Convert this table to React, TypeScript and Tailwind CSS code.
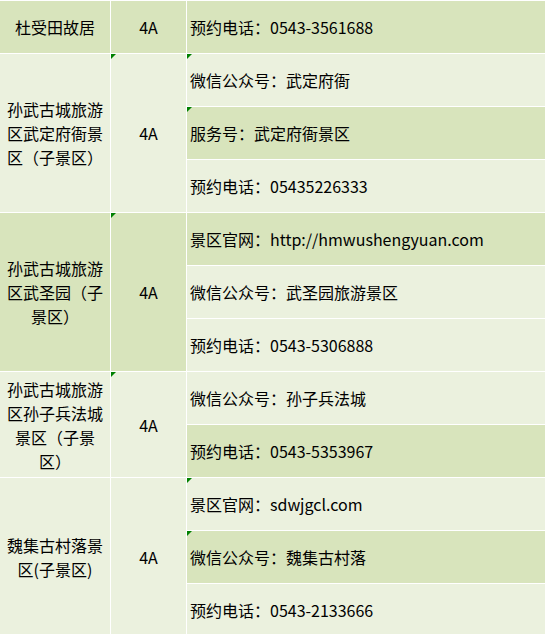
import type { ReactNode } from "react";

const D = "bg-[#d8e4bc]";
const L = "bg-[#ebf1de]";

type Sub = { text: string; dark: boolean; mark?: boolean };
type Group = { name: ReactNode; dark: boolean; mark?: boolean; subs: Sub[] };

const groups: Group[] = [
  { name: "杜受田故居", dark: true, subs: [{ text: "预约电话：0543-3561688", dark: true }] },
  {
    name: "孙武古城旅游区武定府衙景区（子景区）",
    dark: false,
    mark: true,
    subs: [
      { text: "微信公众号：武定府衙", dark: false, mark: true },
      { text: "服务号：武定府衙景区", dark: true, mark: true },
      { text: "预约电话：05435226333", dark: false },
    ],
  },
  {
    name: "孙武古城旅游区武圣园（子景区）",
    dark: true,
    mark: true,
    subs: [
      { text: "景区官网：http://hmwushengyuan.com", dark: true },
      { text: "微信公众号：武圣园旅游景区", dark: false },
      { text: "预约电话：0543-5306888", dark: false },
    ],
  },
  {
    name: "孙武古城旅游区孙子兵法城景区（子景区）",
    dark: false,
    mark: true,
    subs: [
      { text: "微信公众号：孙子兵法城", dark: false },
      { text: "预约电话：0543-5353967", dark: true },
    ],
  },
  {
    name: "魏集古村落景区(子景区)",
    dark: false,
    subs: [
      { text: "景区官网：sdwjgcl.com", dark: false, mark: true },
      { text: "微信公众号：魏集古村落", dark: true, mark: true },
      { text: "预约电话：0543-2133666", dark: false },
    ],
  },
];

const Mark = () => (
  <span className="absolute left-0 top-0 w-0 h-0 border-t-[5px] border-r-[5px] border-t-[#008000] border-r-transparent" />
);

export default function App() {
  return (
    <div
      className="w-[545px] h-[634px] overflow-hidden bg-white pt-px text-[16px] leading-6 text-black"
      style={{ fontFamily: '"Microsoft YaHei", "Noto Sans CJK SC", sans-serif' }}
    >
      <div className="flex flex-col gap-px">
        {groups.map((g, i) => (
          <div key={i} className="flex gap-px">
            <div className={`w-[110px] shrink-0 flex items-center justify-center px-[7px] text-center ${g.dark ? D : L}`}>
              {g.name}
            </div>
            <div className={`relative w-[75px] shrink-0 flex items-center justify-center ${g.dark ? D : L}`}>
              {g.mark && <Mark />}
              4A
            </div>
            <div className="flex-1 flex flex-col gap-px">
              {g.subs.map((s, j) => (
                <div key={j} className={`relative h-[52px] flex items-center pl-[3px] whitespace-nowrap ${s.dark ? D : L}`}>
                  {s.mark && <Mark />}
                  {s.text}
                </div>
              ))}
            </div>
          </div>
        ))}
      </div>
    </div>
  );
}
